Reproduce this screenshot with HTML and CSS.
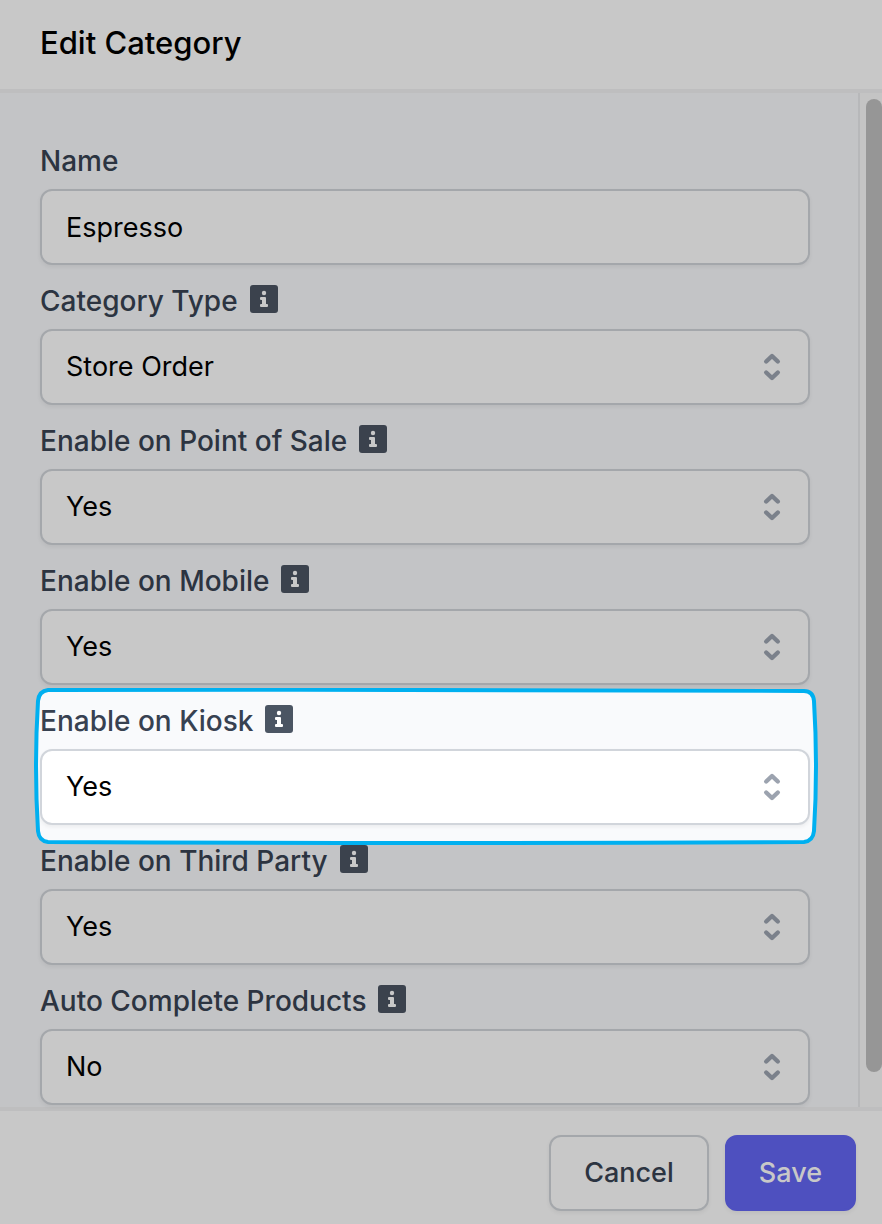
FILE: index.html
```html
<!DOCTYPE html>
<html lang="en">
<head>
    <meta charset="UTF-8">
    <meta name="viewport" content="width=device-width, initial-scale=1.0">
    <title>Edit Category</title>
    <link rel="stylesheet" href="styles.css">
</head>
<body>
<!-- shared icons -->
<svg class="sprite" aria-hidden="true">
    <symbol id="info" viewBox="0 0 28 28">
        <rect width="28" height="28" rx="3" fill="currentColor"/>
        <circle class="info-mark" cx="14" cy="8" r="2.2"/>
        <path class="info-mark" d="M11 12h4q1 0 1 1v6h1q1 0 1 1v1q0 1-1 1h-6q-1 0-1-1v-1q0-1 1-1h1v-4h-1q-1 0-1-1v-1q0-1 1-1z"/>
    </symbol>
    <symbol id="updown" viewBox="0 0 20 32">
        <path d="M4.200 10.500L10 5l5.800 5.500M4.200 21.500L10 27l5.800-5.500" fill="none" stroke="currentColor" stroke-width="4.400" stroke-linecap="round" stroke-linejoin="round"/>
    </symbol>
</svg>

<form class="dialog">
    <header class="header">
        <h1 class="title">Edit Category</h1>
    </header>

    <div class="main">
        <div class="fields">
            <div class="field">
                <div class="label-row"><label for="name">Name</label></div>
                <input class="control" type="text" id="name" value="Espresso">
            </div>
            <div class="field">
                <div class="label-row">
                    <label for="category-type">Category Type</label>
                    <svg class="info"><use href="#info"/></svg>
                </div>
                <div class="select-wrap">
                    <select class="control" id="category-type"><option>Store Order</option></select>
                    <svg class="updown"><use href="#updown"/></svg>
                </div>
            </div>
            <div class="field">
                <div class="label-row">
                    <label for="enable-pos">Enable on Point of Sale</label>
                    <svg class="info"><use href="#info"/></svg>
                </div>
                <div class="select-wrap">
                    <select class="control" id="enable-pos"><option>Yes</option><option>No</option></select>
                    <svg class="updown"><use href="#updown"/></svg>
                </div>
            </div>
            <div class="field">
                <div class="label-row">
                    <label for="enable-mobile">Enable on Mobile</label>
                    <svg class="info"><use href="#info"/></svg>
                </div>
                <div class="select-wrap">
                    <select class="control" id="enable-mobile"><option>Yes</option><option>No</option></select>
                    <svg class="updown"><use href="#updown"/></svg>
                </div>
            </div>
            <div class="field highlighted">
                <svg class="frame" viewBox="0 0 782 158" preserveAspectRatio="none">
                    <path d="M14 2Q391 1 768 3Q777 3 778 13Q782 79 778 144Q777 154 768 155Q391 157 14 155Q5 154 4 144Q0 79 4 13Q5 3 14 2Z"/>
                </svg>
                <div class="label-row">
                    <label for="enable-kiosk">Enable on Kiosk</label>
                    <svg class="info"><use href="#info"/></svg>
                </div>
                <div class="select-wrap">
                    <select class="control" id="enable-kiosk"><option>Yes</option><option>No</option></select>
                    <svg class="updown"><use href="#updown"/></svg>
                </div>
            </div>
            <div class="field">
                <div class="label-row">
                    <label for="enable-third-party">Enable on Third Party</label>
                    <svg class="info"><use href="#info"/></svg>
                </div>
                <div class="select-wrap">
                    <select class="control" id="enable-third-party"><option>Yes</option><option>No</option></select>
                    <svg class="updown"><use href="#updown"/></svg>
                </div>
            </div>
            <div class="field">
                <div class="label-row">
                    <label for="auto-complete">Auto Complete Products</label>
                    <svg class="info"><use href="#info"/></svg>
                </div>
                <div class="select-wrap">
                    <select class="control" id="auto-complete"><option>No</option><option>Yes</option></select>
                    <svg class="updown"><use href="#updown"/></svg>
                </div>
            </div>
        </div>
        <div class="scrollbar"><div class="thumb"></div></div>
    </div>

    <footer class="footer">
        <button class="btn" type="button">Cancel</button>
        <button class="btn primary" type="submit">Save</button>
    </footer>
</form>
</body>
</html>
```
FILE: styles.css
```css
* {
    box-sizing: border-box;
}

body {
    margin: 0;
    background: #c8c8c8;
    font-family: Inter, "Liberation Sans", sans-serif;
    font-size: 28px;
    line-height: 40px;
    color: #000;
}

.sprite {
    position: absolute;
    width: 0;
    height: 0;
}

.dialog {
    display: flex;
    flex-direction: column;
    min-height: 100vh;
}

.header {
    padding: 21px 40px 24px;
    border-bottom: 4px solid #bebebf;
}

.title {
    margin: 0;
    font-size: 31px;
    line-height: 44px;
    font-weight: 500;
}

.main {
    display: flex;
    background: #c3c4c6;
}

.fields {
    flex: 1;
    display: flex;
    flex-direction: column;
    gap: 16px;
    padding: 48px 48px 2px 40px;
}

.field {
    position: relative;
    display: flex;
    flex-direction: column;
    gap: 8px;
}

.label-row {
    display: flex;
    gap: 12px;
    color: #2c3441;
    font-weight: 500;
}

.info {
    width: 28px;
    height: 28px;
    margin-top: 4px;
    color: #3b424d;
}

.info-mark {
    fill: var(--mark, #c8c8c8);
}

.select-wrap {
    position: relative;
}

.control {
    display: block;
    width: 100%;
    height: 76px;
    margin: 0;
    padding: 0 24px;
    appearance: none;
    background: #c8c8c8;
    border: 2px solid #a4a7ab;
    border-radius: 12px;
    box-shadow: 0 2px 4px rgba(0, 0, 0, 0.06);
    font: inherit;
    font-size: 27px;
    color: inherit;
}

.updown {
    position: absolute;
    top: 22px;
    right: 28px;
    width: 20px;
    height: 32px;
    color: #7b818b;
    pointer-events: none;
}

/* spotlighted field */
.highlighted {
    isolation: isolate;
}

.frame {
    position: absolute;
    z-index: -1;
    top: -13px;
    left: -6px;
    width: calc(100% + 14px);
    height: calc(100% + 33px);
}

.frame path {
    fill: #f9fafc;
    stroke: #00b0f0;
    stroke-width: 4px;
}

.highlighted .label-row {
    color: #374151;
}

.highlighted .info {
    color: #4b5563;
    --mark: #fff;
}

.highlighted .control {
    background: #fff;
    border-color: #d1d5db;
}

.highlighted .updown {
    color: #9ca3af;
}

.scrollbar {
    width: 24px;
    padding: 6px 0 0 6px;
    border-left: 2px solid #b7b8ba;
    background: #c4c4c4;
}

.thumb {
    height: 973px;
    border-radius: 8px;
    background: #969696;
}

.footer {
    display: flex;
    justify-content: flex-end;
    gap: 16px;
    padding: 24px 26px 13px;
    border-top: 4px solid #bebebf;
}

.btn {
    height: 76px;
    padding: 0 33px;
    background: #c8c8c8;
    border: 2px solid #a4a7ab;
    border-radius: 12px;
    box-shadow: 0 2px 4px rgba(0, 0, 0, 0.06);
    font: inherit;
    font-size: 27px;
    font-weight: 500;
    color: #2c3441;
}

.primary {
    padding: 0 32px;
    background: #4e50bf;
    border-color: #4e50bf;
    color: #c8c8c8;
}
```
